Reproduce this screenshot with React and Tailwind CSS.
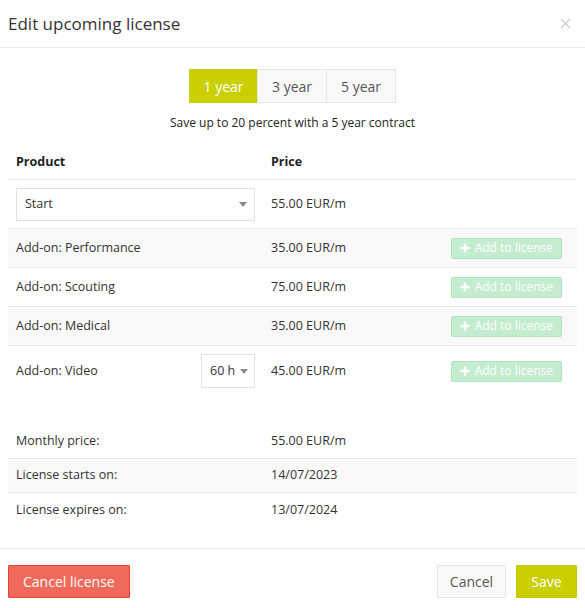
import React, { useState } from 'react';

const Caret = () => (
  <span className="inline-block w-0 h-0 border-l-[4px] border-r-[4px] border-t-[5px] border-l-transparent border-r-transparent border-t-[#888]" />
);

const AddButton = () => (
  <button className="h-[21px] px-[8px] flex items-center gap-[5px] bg-[#c4ecce] border border-[#b3e4c0] rounded-[2px] text-white text-[12px] leading-none">
    <svg width="10" height="10" viewBox="0 0 10 10">
      <path d="M5 0.5v9M0.5 5h9" stroke="white" strokeWidth="2.4" />
    </svg>
    Add to license
  </button>
);

const addons = [
  { name: 'Add-on: Performance', price: '35.00 EUR/m', striped: true },
  { name: 'Add-on: Scouting', price: '75.00 EUR/m', striped: false },
  { name: 'Add-on: Medical', price: '35.00 EUR/m', striped: true },
];

export default function App() {
  const [term, setTerm] = useState(1);

  return (
    <div className="w-[585px] h-[608px] bg-white text-[#333] text-[12.5px] font-['Open_Sans',sans-serif] flex flex-col">
      {/* Header */}
      <div className="h-[48px] flex items-center justify-between pl-[8px] pr-[14px] border-b border-[#e8e8e8]">
        <h1 className="text-[17px] text-[#333] font-normal">Edit upcoming license</h1>
        <svg width="11" height="11" viewBox="0 0 10 10">
          <path d="M1 1l8 8M9 1l-8 8" stroke="#c8c8c8" strokeWidth="1.2" />
        </svg>
      </div>

      <div className="flex-1 px-[8px]">
        {/* Term switch */}
        <div className="flex justify-center pt-[21px]">
          {[1, 3, 5].map((y) => (
            <button
              key={y}
              onClick={() => setTerm(y)}
              className={
                term === y
                  ? 'w-[69px] h-[34px] bg-[#c9cf00] border border-[#c9cf00] text-white text-[14px]'
                  : 'w-[70px] h-[34px] bg-[#f9f9f9] border border-[#e6e6e6] -ml-px text-[#555] text-[14px]'
              }
            >
              {y} year
            </button>
          ))}
        </div>
        <p className="text-center text-[12px] text-[#222] mt-[11px]">Save up to 20 percent with a 5 year contract</p>

        {/* Products table */}
        <div className="mt-[13px]">
          <div className="h-[35px] flex items-center border-b border-[#e3ebf1] font-bold text-[12.5px] text-[#222]">
            <div className="w-[255px] pl-[8px]">Product</div>
            <div className="pl-[8px]">Price</div>
          </div>
          <div className="h-[49px] flex items-center border-b border-[#e3ebf1]">
            <div className="w-[255px] px-[8px]">
              <div className="h-[33px] border border-[#e2e2e2] flex items-center justify-between pl-[8px] pr-[7px] text-[#333]">
                <span>Start</span>
                <Caret />
              </div>
            </div>
            <div className="pl-[8px]">55.00 EUR/m</div>
          </div>
          {addons.map((a) => (
            <div
              key={a.name}
              className={`h-[39px] flex items-center border-b border-[#e3ebf1] ${a.striped ? 'bg-[#f9f9f9]' : 'bg-white'}`}
            >
              <div className="w-[255px] pl-[8px]">{a.name}</div>
              <div className="pl-[8px] flex-1">{a.price}</div>
              <div className="pr-[15px]">
                <AddButton />
              </div>
            </div>
          ))}
          <div className="h-[50px] flex items-center">
            <div className="w-[255px] px-[8px] flex items-center justify-between">
              <span>Add-on: Video</span>
              <div className="w-[54px] h-[34px] border border-[#e2e2e2] flex items-center gap-[5px] pl-[8px] text-[#333]">
                <span>60 h</span>
                <Caret />
              </div>
            </div>
            <div className="pl-[8px] flex-1">45.00 EUR/m</div>
            <div className="pr-[15px]">
              <AddButton />
            </div>
          </div>
        </div>

        {/* Summary */}
        <div className="mt-[28px]">
          <div className="h-[35px] flex items-center border-b border-[#e3ebf1]">
            <div className="w-[255px] pl-[8px]">Monthly price:</div>
            <div className="pl-[8px]">55.00 EUR/m</div>
          </div>
          <div className="h-[34px] flex items-center border-b border-[#e3ebf1] bg-[#f9f9f9]">
            <div className="w-[255px] pl-[8px]">License starts on:</div>
            <div className="pl-[8px]">14/07/2023</div>
          </div>
          <div className="h-[34px] flex items-center">
            <div className="w-[255px] pl-[8px]">License expires on:</div>
            <div className="pl-[8px]">13/07/2024</div>
          </div>
        </div>
      </div>

      {/* Footer */}
      <div className="h-[60px] border-t border-[#e8e8e8] flex items-start justify-between px-[8px] pt-[16px]">
        <button className="h-[33px] px-[14px] bg-[#f0695a] border border-[#e8432f] text-white text-[14px] rounded-[1px]">
          Cancel license
        </button>
        <div className="flex gap-[10px]">
          <button className="h-[33px] w-[69px] bg-[#f9f9f9] border border-[#e6e6e6] text-[#555] text-[14px] rounded-[1px]">
            Cancel
          </button>
          <button className="h-[33px] w-[61px] bg-[#c9cf00] border border-[#c2c800] text-white text-[14px] rounded-[1px]">
            Save
          </button>
        </div>
      </div>
    </div>
  );
}
